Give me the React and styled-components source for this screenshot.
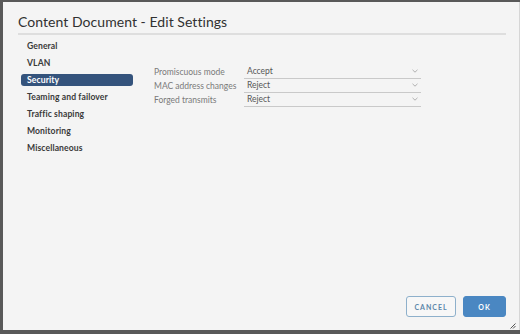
import React from "react";
import styled, { createGlobalStyle } from "styled-components";

const GlobalStyle = createGlobalStyle`
  html, body {
    margin: 0;
    padding: 0;
    background: #5b5b5b;
  }
  * {
    box-sizing: border-box;
  }
`;

const navItems = [
  "General",
  "VLAN",
  "Security",
  "Teaming and failover",
  "Traffic shaping",
  "Monitoring",
  "Miscellaneous",
];

const fields = [
  { label: "Promiscuous mode", value: "Accept" },
  { label: "MAC address changes", value: "Reject" },
  { label: "Forged transmits", value: "Reject" },
];

const Chevron = () => (
  <svg width="6" height="4" viewBox="0 0 6 4">
    <path d="M0.5 0.8 L3 3.2 L5.5 0.8" fill="none" stroke="#a8a8a8" strokeWidth="0.9" />
  </svg>
);

const App = () => {
  return (
    <Screen>
      <GlobalStyle />
      <Dialog>
        <Header>
          <Title>Content Document - Edit Settings</Title>
        </Header>
        <Body>
          <Nav>
            {navItems.map((item) => (
              <NavItem key={item} active={item === "Security"}>
                {item}
              </NavItem>
            ))}
          </Nav>
          <Form>
            {fields.map((f) => (
              <Row key={f.label}>
                <Label>{f.label}</Label>
                <Select>
                  <span>{f.value}</span>
                  <Chevron />
                </Select>
              </Row>
            ))}
          </Form>
        </Body>
        <Footer>
          <Button variant="outline">CANCEL</Button>
          <Button variant="primary">OK</Button>
        </Footer>
        <Grip width="6" height="6" viewBox="0 0 6 6">
          <path d="M5.5 0.5 L0.5 5.5 M5.5 3 L3 5.5" stroke="#555" strokeWidth="1" />
        </Grip>
      </Dialog>
    </Screen>
  );
};

const Screen = styled.div`
  width: 520px;
  height: 334px;
  padding: 2px 0 4px 3px;
  background: #595959;
  font-family: Lato, "Open Sans", sans-serif;
`;

const Dialog = styled.div`
  position: relative;
  height: 100%;
  background: #f4f4f4;
  border-right: 1px solid #d6d6d6;
  display: flex;
  flex-direction: column;
`;

const Header = styled.div`
  padding: 0 13px 0 15px;
`;

const Title = styled.h1`
  margin: 0;
  padding-top: 10px;
  height: 33px;
  font-size: 14px;
  font-weight: 400;
  letter-spacing: 0.05px;
  color: #313131;
  line-height: 19px;
  border-bottom: 2px solid #dedede;
`;

const Body = styled.div`
  flex: 1;
  display: flex;
  padding: 5px 0 0 18px;
  gap: 21px;
`;

const Nav = styled.div`
  width: 112px;
  display: flex;
  flex-direction: column;
  gap: 5px;
`;

const NavItem = styled.div`
  height: 12px;
  line-height: 12px;
  padding-left: 6px;
  border-radius: 3px;
  font-size: 8.6px;
  font-weight: 700;
  letter-spacing: 0.1px;
  color: ${(p) => (p.active ? "#ffffff" : "#3a3a3a")};
  background: ${(p) => (p.active ? "#34537c" : "transparent")};
`;

const Form = styled.div`
  margin-top: 25px;
  display: flex;
  flex-direction: column;
`;

const Row = styled.div`
  display: flex;
  align-items: center;
  height: 14px;
`;

const Label = styled.div`
  width: 90px;
  font-size: 8.5px;
  color: #7a7a7a;
  line-height: 14px;
  padding-bottom: 1px;
`;

const Select = styled.div`
  width: 177px;
  height: 14px;
  display: flex;
  align-items: center;
  justify-content: space-between;
  padding: 0 3px 1px 3px;
  border-bottom: 1px solid #c9c9c9;
  font-size: 8.5px;
  color: #565656;
`;

const Footer = styled.div`
  display: flex;
  justify-content: flex-end;
  gap: 7px;
  padding: 0 13px 13px 0;
`;

const Button = styled.button`
  height: 21px;
  padding: 0;
  width: ${(p) => (p.variant === "primary" ? "43px" : "50px")};
  border-radius: 3px;
  font-family: Lato, "Open Sans", sans-serif;
  font-size: 7px;
  font-weight: 700;
  letter-spacing: 1px;
  border: 1px solid ${(p) => (p.variant === "primary" ? "#4a87c2" : "#8eb0cb")};
  background: ${(p) => (p.variant === "primary" ? "#4a87c2" : "#f7f7f7")};
  color: ${(p) => (p.variant === "primary" ? "#ffffff" : "#5c86aa")};
`;

const Grip = styled.svg`
  position: absolute;
  right: 3px;
  bottom: 1px;
`;

export default App;
